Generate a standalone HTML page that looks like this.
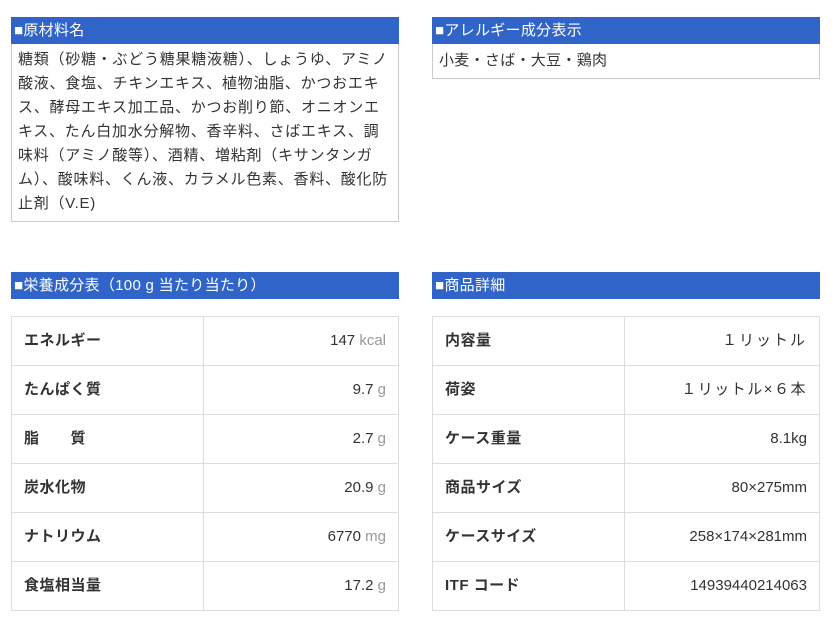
<!DOCTYPE html>
<html><head><meta charset="utf-8"><style>
body{margin:0;background:#fff;font-family:"Liberation Sans","Noto Sans CJK JP",sans-serif;color:#333;font-size:15px}
.col{position:absolute;width:388px}
.h{background:#3164c9;color:#fff;height:27px;line-height:28px;padding-left:3px;font-size:15px;letter-spacing:0.3px}
.box{border:1px solid #ccc;border-top:none;padding:4px 6px 5px 6px;line-height:24px;letter-spacing:0.75px;font-size:15px;white-space:nowrap;overflow:hidden}
table{border-collapse:collapse;width:388px;position:absolute}
td{border:1px solid #ddd;height:48px;padding:0 12px;font-size:15px;line-height:20px;vertical-align:middle}
td.l{font-weight:bold;width:167px;letter-spacing:0.5px}
td.r{text-align:right}
.u{color:#999}
</style></head><body>
<div class="col" style="left:11px;top:17px"><div class="h">■原材料名</div>
<div class="box">糖類（砂糖・ぶどう糖果糖液糖）、しょうゆ、アミノ<br>酸液、食塩、チキンエキス、植物油脂、かつおエキ<br>ス、酵母エキス加工品、かつお削り節、オニオンエ<br>キス、たん白加水分解物、香辛料、さばエキス、調<br>味料（アミノ酸等）、酒精、増粘剤（キサンタンガ<br>ム）、酸味料、くん液、カラメル色素、香料、酸化防<br>止剤（V.E)</div></div>
<div class="col" style="left:432px;top:17px"><div class="h">■アレルギー成分表示</div>
<div class="box" style="padding-top:5px;padding-bottom:5px;letter-spacing:0.3px">小麦・さば・大豆・鶏肉</div></div>
<div class="col" style="left:11px;top:272px"><div class="h">■栄養成分表（100 g 当たり当たり）</div></div>
<div class="col" style="left:432px;top:272px"><div class="h">■商品詳細</div></div>
<table style="left:11px;top:316px">
<tr><td class="l">エネルギー</td><td class="r">147 <span class="u">kcal</span></td></tr>
<tr><td class="l">たんぱく質</td><td class="r">9.7 <span class="u">g</span></td></tr>
<tr><td class="l">脂　　質</td><td class="r">2.7 <span class="u">g</span></td></tr>
<tr><td class="l">炭水化物</td><td class="r">20.9 <span class="u">g</span></td></tr>
<tr><td class="l">ナトリウム</td><td class="r">6770 <span class="u">mg</span></td></tr>
<tr><td class="l">食塩相当量</td><td class="r">17.2 <span class="u">g</span></td></tr>
</table>
<table style="left:432px;top:316px">
<tr><td class="l">内容量</td><td class="r" style="letter-spacing:2px">１リットル</td></tr>
<tr><td class="l">荷姿</td><td class="r" style="letter-spacing:1.5px">１リットル×６本</td></tr>
<tr><td class="l">ケース重量</td><td class="r">8.1kg</td></tr>
<tr><td class="l">商品サイズ</td><td class="r">80×275mm</td></tr>
<tr><td class="l">ケースサイズ</td><td class="r">258×174×281mm</td></tr>
<tr><td class="l">ITF コード</td><td class="r">14939440214063</td></tr>
</table>
</body></html>
